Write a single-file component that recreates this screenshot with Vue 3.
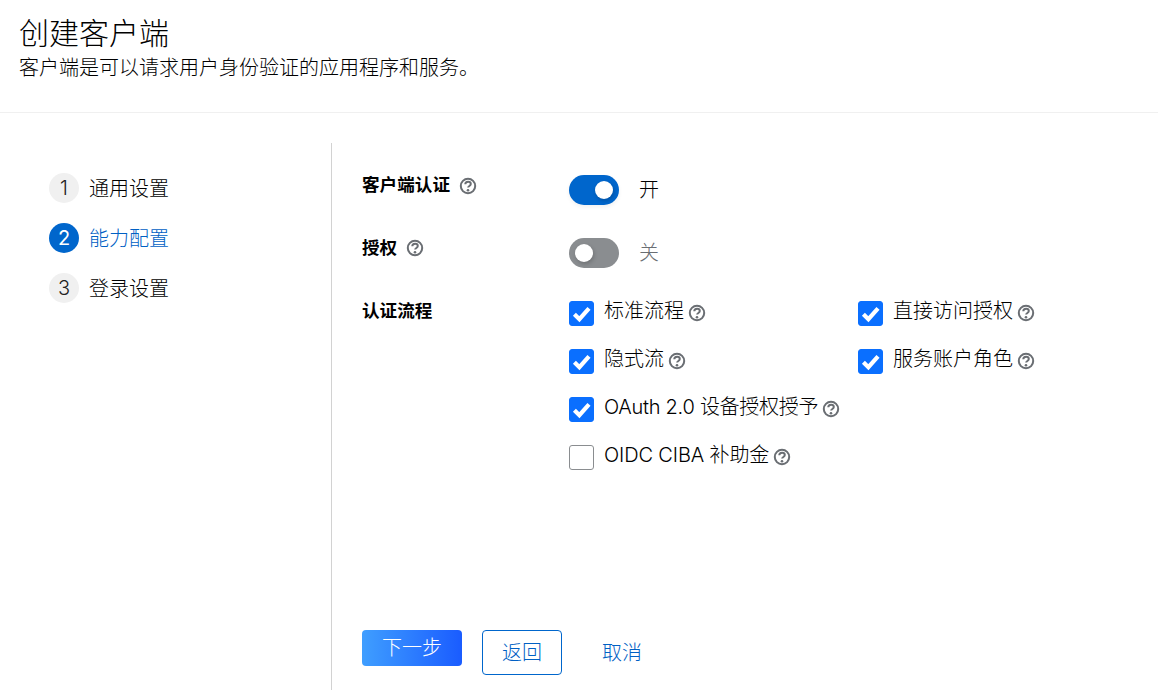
<script setup>
const steps = [
  { n: 1, label: '通用设置' },
  { n: 2, label: '能力配置', current: true },
  { n: 3, label: '登录设置' },
]
const flows = [
  { label: '标准流程', checked: true },
  { label: '直接访问授权', checked: true },
  { label: '隐式流', checked: true },
  { label: '服务账户角色', checked: true },
  { label: 'OAuth 2.0 设备授权授予', tight: 'tight', checked: true, wide: true },
  { label: 'OIDC CIBA 补助金', tight: 'tight-s', checked: false, wide: true },
]
</script>

<template>
  <div class="page">
    <header class="head">
      <h1>创建客户端</h1>
      <p>客户端是可以请求用户身份验证的应用程序和服务。</p>
    </header>
    <div class="body">
      <nav class="steps">
        <div v-for="s in steps" :key="s.n" class="step" :class="{ current: s.current }">
          <span class="num">{{ s.n }}</span>
          <span class="step-label">{{ s.label }}</span>
        </div>
      </nav>
      <main class="main">
        <div class="form">
          <div class="row row-switch">
            <div class="label"><b>客户端认证</b>
              <svg class="help help-l" viewBox="0 0 18 18"><circle cx="9" cy="9" r="7.2" /><path d="M6.3 7.3c0-1.7 1.2-2.6 2.8-2.6s2.7.9 2.7 2.3c0 2-2.7 1.9-2.7 3.6" /><circle class="dot" cx="9" cy="13.2" r="1.3" /></svg>
            </div>
            <div class="control">
              <span class="switch on"><i></i></span>
              <span class="state">开</span>
            </div>
          </div>
          <div class="row row-switch">
            <div class="label"><b>授权</b>
              <svg class="help help-l" viewBox="0 0 18 18"><circle cx="9" cy="9" r="7.2" /><path d="M6.3 7.3c0-1.7 1.2-2.6 2.8-2.6s2.7.9 2.7 2.3c0 2-2.7 1.9-2.7 3.6" /><circle class="dot" cx="9" cy="13.2" r="1.3" /></svg>
            </div>
            <div class="control">
              <span class="switch"><i></i></span>
              <span class="state off">关</span>
            </div>
          </div>
          <div class="row">
            <div class="label"><b>认证流程</b></div>
            <div class="flows">
              <label v-for="f in flows" :key="f.label" class="flow" :class="{ wide: f.wide }">
                <span class="box" :class="{ checked: f.checked }">
                  <svg v-if="f.checked" viewBox="0 0 25 25"><path d="M5.4 13.2l5 5 9.6-10.8" /></svg>
                </span>
                <span class="flow-text" :class="f.tight">{{ f.label }}</span>
                <svg class="help" viewBox="0 0 18 18"><circle cx="9" cy="9" r="7.2" /><path d="M6.3 7.3c0-1.7 1.2-2.6 2.8-2.6s2.7.9 2.7 2.3c0 2-2.7 1.9-2.7 3.6" /><circle class="dot" cx="9" cy="13.2" r="1.3" /></svg>
              </label>
            </div>
          </div>
        </div>
        <footer class="actions">
          <button class="btn primary">下一步</button>
          <button class="btn secondary">返回</button>
          <button class="btn link">取消</button>
        </footer>
      </main>
    </div>
  </div>
</template>

<style scoped>
.page {
  width: 1158px;
  height: 690px;
  display: flex;
  flex-direction: column;
  overflow: hidden;
  background: #fff;
  color: #000;
  font-family: Inter, "Noto Sans CJK SC", sans-serif;
  font-size: 20px;
  font-weight: 300;
}
.head {
  height: 112px;
  padding-left: 19px;
  border-bottom: 1px solid #f0f0f0;
}
.head h1 {
  margin: 0;
  padding-top: 14px;
  font-size: 30px;
  font-weight: 300;
  line-height: 38px;
}
.head p {
  margin: 2px 0 0;
  line-height: 28px;
}
.body {
  flex: 1;
  display: flex;
  padding-top: 30px;
  min-height: 0;
}
.steps {
  width: 282px;
  padding: 30px 0 0 49px;
  border-right: 1px solid #d2d2d2;
  display: flex;
  flex-direction: column;
  gap: 20px;
  flex: none;
}
.step {
  display: flex;
  align-items: center;
  gap: 10px;
  height: 30px;
}
.step-label { position: relative; top: -1px; }
.num {
  width: 30px;
  height: 30px;
  border-radius: 50%;
  background: #f0f0f0;
  display: flex;
  align-items: center;
  justify-content: center;
  font-size: 20px;
  line-height: 1;
  color: #222;
}
.current .num { background: #06c; color: #fff; font-weight: 400; }
.current .step-label { color: #0060c4; }
.main {
  flex: 1;
  display: flex;
  flex-direction: column;
  justify-content: space-between;
  padding: 32px 0 15px 30px;
}
.form {
  display: flex;
  flex-direction: column;
  gap: 33px;
}
.row { display: flex; }
.row-switch { height: 30px; }
.label {
  width: 207px;
  flex: none;
  display: flex;
  align-items: flex-start;
  gap: 9px;
  margin-top: -2px;
  font-size: 17.6px;
  line-height: 24px;
  font-weight: 700;
}
.label b { font-weight: 700; }
.control {
  display: flex;
  align-items: center;
  gap: 20px;
}
.switch {
  position: relative;
  width: 50px;
  height: 30px;
  border-radius: 15px;
  background: #8a8d90;
  display: block;
}
.switch i {
  position: absolute;
  top: 6px;
  left: 6px;
  width: 18px;
  height: 18px;
  border-radius: 50%;
  background: #fff;
  box-shadow: 1px 2px 4px rgba(3, 3, 3, .2);
}
.switch.on { background: #06c; box-shadow: 0 2px 4px rgba(3, 3, 3, .06); }
.switch.on i { left: 26px; }
.state { line-height: 30px; }
.state.off { color: #6a6e73; }
.flows {
  display: grid;
  grid-template-columns: 289px 1fr;
  row-gap: 23px;
}
.flow {
  display: flex;
  align-items: center;
  height: 25px;
}
.flow.wide { grid-column: 1 / 3; }
.box {
  width: 25px;
  height: 25px;
  box-sizing: border-box;
  border-radius: 3px;
  border: 1px solid #8a8d90;
  flex: none;
  margin-right: 10px;
  background: #fff;
}
.box.checked { background: #0a6fff; border-color: #0a6fff; }
.box svg { display: block; width: 25px; height: 25px; margin: -1px; }
.box path { fill: none; stroke: #fff; stroke-width: 4.2; }
.flow-text { line-height: 25px; white-space: pre; padding-bottom: 4px; }
.tight { letter-spacing: -.27px; }
.tight-s { letter-spacing: -.13px; }
.help {
  width: 18px;
  height: 18px;
  flex: none;
  margin: 0 0 1px 4px;
}
.help-l { margin: 3px 0 0; }
.row:first-child .help-l { margin-top: 4px; }
.help circle, .help path {
  fill: none;
  stroke: #6a6e73;
  stroke-width: 2;
}
.help .dot { fill: #6a6e73; stroke: none; }
.actions {
  display: flex;
  align-items: flex-start;
  gap: 20px;
}
.btn {
  font: inherit;
  border: none;
  background: none;
  padding: 0;
  line-height: 1;
}
.primary {
  width: 100px;
  height: 36px;
  border-radius: 4px;
  color: #fff;
  background: linear-gradient(90deg, #3f9eff, #1a5cff);
}
.secondary {
  width: 80px;
  height: 45px;
  border-radius: 4px;
  box-sizing: border-box;
  border: 1px solid #06c;
  color: #0060c4;
}
.link {
  height: 45px;
  padding: 0 20px;
  color: #0060c4;
}
</style>

<style>
html, body { margin: 0; background: #fff; }
</style>
